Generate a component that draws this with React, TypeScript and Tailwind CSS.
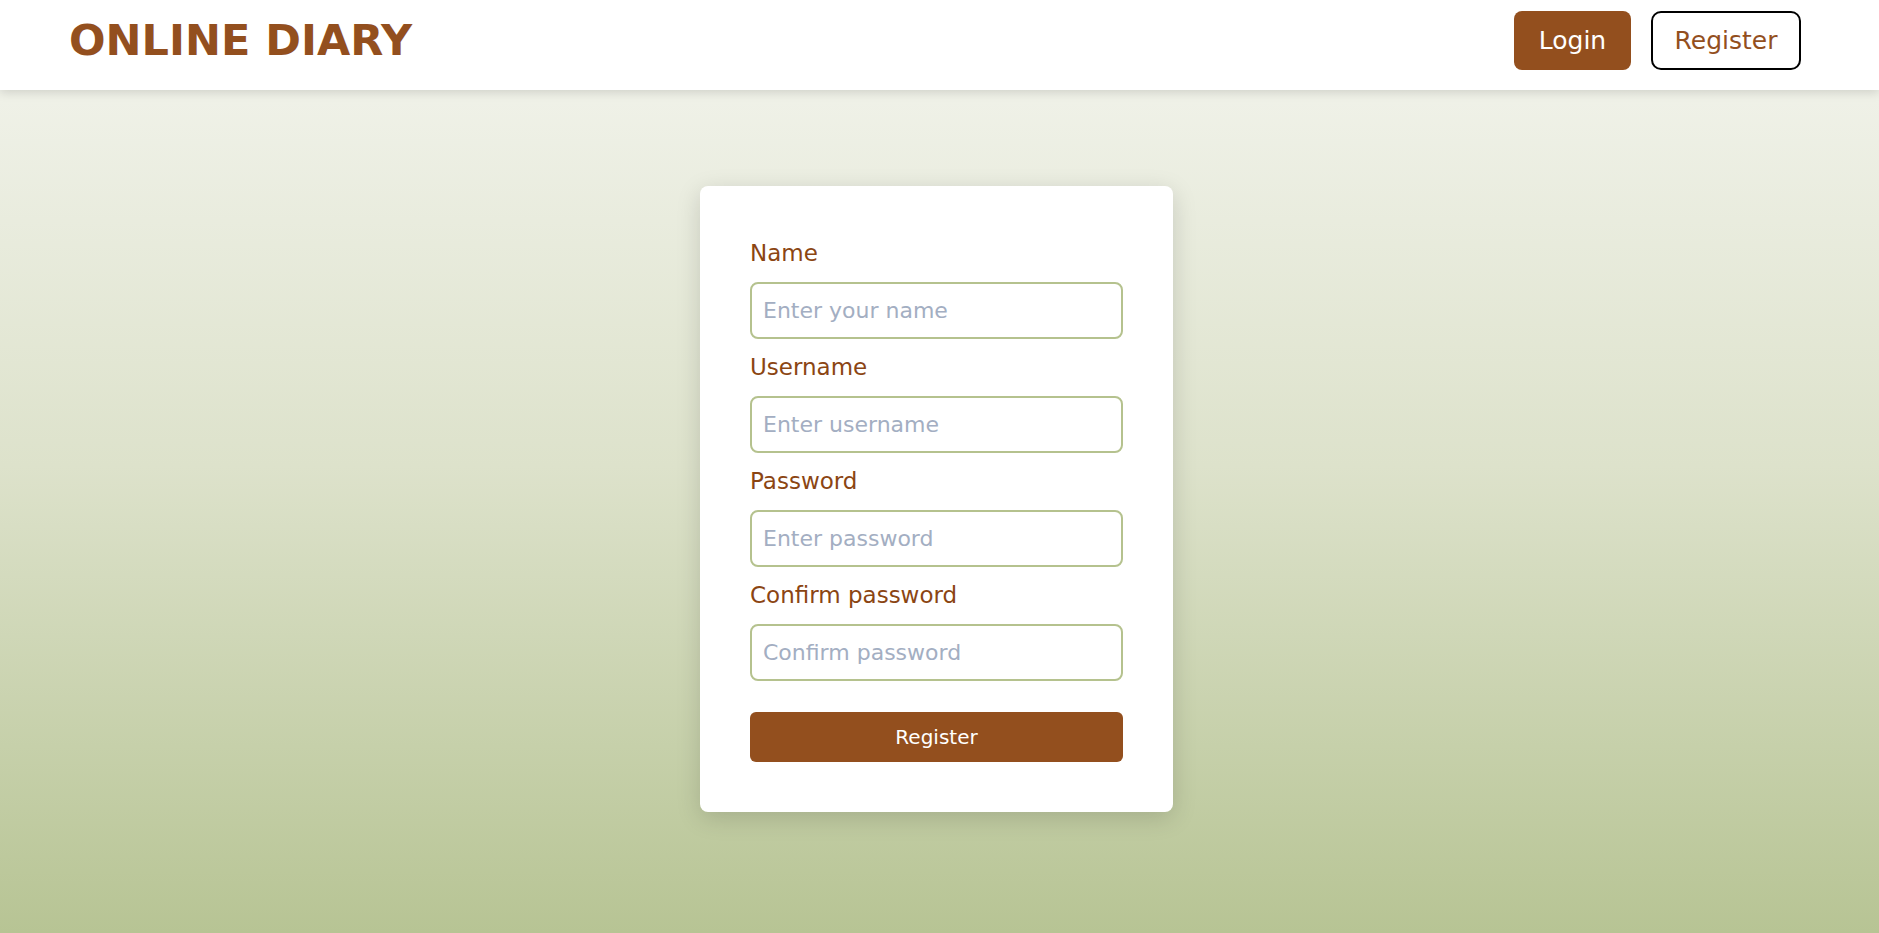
import React from "react";

const font = { fontFamily: '"DejaVu Sans", "Noto Sans", sans-serif' };

function Field({ label, placeholder, type = "text" }: { label: string; placeholder: string; type?: string }) {
  return (
    <div className="flex flex-col">
      <div className="h-[57px] flex items-center">
        <label className="text-[23px] leading-none text-[#8b4513]">{label}</label>
      </div>
      <input
        type={type}
        placeholder={placeholder}
        className="h-[57px] w-full rounded-[8px] border-2 border-[#b5c28e] bg-white px-[11px] text-[22px] text-gray-700 outline-none placeholder:text-[#a3aec2]"
        style={font}
      />
    </div>
  );
}

export default function App() {
  return (
    <div className="min-h-[933px] flex flex-col bg-gradient-to-b from-[#f4f5ef] via-[#dde2cb] via-50% to-[#b7c494]" style={font}>
      <header className="relative z-10 h-[90px] bg-white shadow-[0_2px_10px_rgba(0,0,0,0.15)] flex items-start justify-between pl-[69px] pr-[78px] pt-[11px]">
        <div className="h-[59px] flex items-center">
          <h1 className="text-[43px] font-bold leading-none text-[#934f1e]">ONLINE DIARY</h1>
        </div>
        <div className="flex items-center gap-[20px]">
          <button className="h-[59px] w-[117px] rounded-[8px] bg-[#934f1e] text-[25px] text-white">Login</button>
          <button className="h-[59px] w-[150px] rounded-[10px] border-2 border-black bg-white text-[25px] text-[#934f1e]">Register</button>
        </div>
      </header>
      <main className="flex-1 flex justify-center pt-[96px] pb-[100px] pr-[6px]">
        <div className="w-[473px] h-fit rounded-[8px] bg-white px-[50px] pt-[39px] pb-[50px] shadow-[0_6px_24px_rgba(0,0,0,0.15)]">
          <Field label="Name" placeholder="Enter your name" />
          <Field label="Username" placeholder="Enter username" />
          <Field label="Password" placeholder="Enter password" type="password" />
          <Field label="Confirm password" placeholder="Confirm password" type="password" />
          <button className="mt-[31px] h-[50px] w-full rounded-[6px] bg-[#934f1e] text-[20px] text-white">Register</button>
        </div>
      </main>
    </div>
  );
}
